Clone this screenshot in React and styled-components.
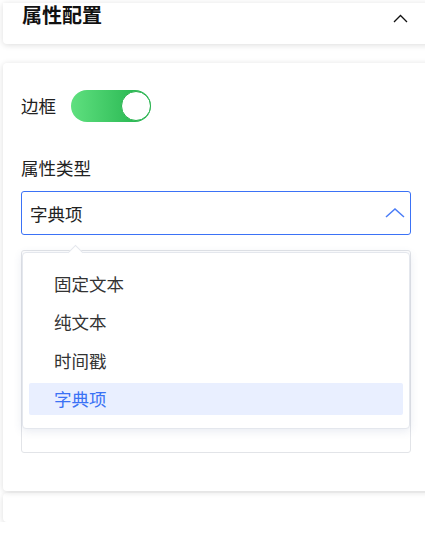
import styled, { createGlobalStyle } from 'styled-components'

const GlobalStyle = createGlobalStyle`
    html, body {
        margin: 0;
        padding: 0;
        background: #fff;
        overflow: hidden;
        font-family: "Noto Sans CJK SC", "Noto Sans", sans-serif;
    }
`

const Page = styled.div`
    padding: 3px 0 0 3px;
    display: flex;
    flex-direction: column;
`
const Card = styled.div`
    background: #fff;
    margin-right: -20px;
    border-radius: 4px;
    box-shadow: 0 1px 6px rgba(0, 0, 0, 0.14);
`
const HeaderCard = styled(Card)`
    height: 41px;
    border-radius: 0 0 4px 4px;
    display: flex;
    align-items: center;
    justify-content: space-between;
    padding: 0 37px 0 19px;
`
const Title = styled.h2`
    margin: 0;
    margin-top: -17px;
    font-size: 20px;
    font-weight: 700;
    color: #111;
    line-height: 24px;
`
const Chevron = styled.svg`
    display: block;
    margin-top: -11px;
`
const BodyCard = styled(Card)`
    margin-top: 19px;
    padding: 27px 34px 38px 18px;
    position: relative;
    z-index: 1;
`
const FooterCard = styled(Card)`
    margin-top: 2px;
    height: 29px;
    border-radius: 4px;
    box-shadow: 0 2px 6px rgba(0, 0, 0, 0.14);
`
const Row = styled.div`
    display: flex;
    align-items: center;
    gap: 15px;
    height: 32px;
`
const Label = styled.div`
    font-size: 17.5px;
    color: #222;
    line-height: 24px;
    margin-top: ${props => props.top || 0}px;
`
const Switch = styled.div`
    width: 80px;
    height: 32px;
    border-radius: 16px;
    background: linear-gradient(90deg, #5fe07f 0%, #1fb04a 100%);
    display: flex;
    align-items: center;
    justify-content: flex-end;
    box-sizing: border-box;
`
const Knob = styled.div`
    width: 30px;
    height: 30px;
    border-radius: 50%;
    background: #fff;
    border: 1px solid #27b24d;
    box-sizing: border-box;
`
const SelectWrap = styled.div`
    position: relative;
    margin-top: 11px;
`
const Select = styled.div`
    height: 44px;
    box-sizing: border-box;
    border: 1px solid #3b72f6;
    border-radius: 3px;
    display: flex;
    align-items: center;
    justify-content: space-between;
    padding: 0 5px 0 8px;
    font-size: 17.5px;
    color: #222;
`
const Dropdown = styled.div`
    position: absolute;
    left: 1px;
    right: 1px;
    top: 61px;
    background: #fff;
    border: 1px solid #e4e7ed;
    border-radius: 4px;
    box-shadow: 0 2px 10px rgba(60, 80, 140, 0.12);
    padding: 14px 6px 13px 6px;
    display: flex;
    flex-direction: column;
    gap: 6.5px;
    z-index: 2;

    &::before {
        content: "";
        position: absolute;
        top: -6px;
        left: 47px;
        width: 10px;
        height: 10px;
        background: #fff;
        border-left: 1px solid #e4e7ed;
        border-top: 1px solid #e4e7ed;
        transform: rotate(45deg);
    }
`
const Option = styled.div`
    height: 32px;
    display: flex;
    align-items: center;
    padding-left: 25px;
    font-size: 17.5px;
    border-radius: 2px;
    color: ${props => props.active ? "#3a72f5" : "#333"};
    background: ${props => props.active ? "#e9efff" : "transparent"};
`
const FieldBox = styled.div`
    margin-top: 15px;
    height: 203px;
    box-sizing: border-box;
    border: 1px solid #e2e4e8;
    border-radius: 3px;
`

const options = ["固定文本", "纯文本", "时间戳", "字典项"]

const App = () => {
    return (
        <Page>
            <GlobalStyle />
            <HeaderCard>
                <Title>属性配置</Title>
                <Chevron width="15" height="9" viewBox="0 0 15 9">
                    <path d="M1 8 L7.5 1.5 L14 8" fill="none" stroke="#111" strokeWidth="1.3" />
                </Chevron>
            </HeaderCard>
            <BodyCard>
                <Row>
                    <Label>边框</Label>
                    <Switch><Knob /></Switch>
                </Row>
                <Label top={34}>属性类型</Label>
                <SelectWrap>
                    <Select>
                        <span>字典项</span>
                        <svg width="20" height="10" viewBox="0 0 20 10">
                            <path d="M1 9 L10 1 L19 9" fill="none" stroke="#4a7cf7" strokeWidth="1.5" />
                        </svg>
                    </Select>
                    <Dropdown>
                        {options.map(o => (
                            <Option key={o} active={o === "字典项"}>{o}</Option>
                        ))}
                    </Dropdown>
                </SelectWrap>
                <FieldBox />
            </BodyCard>
            <FooterCard />
        </Page>
    )
}

export default App
